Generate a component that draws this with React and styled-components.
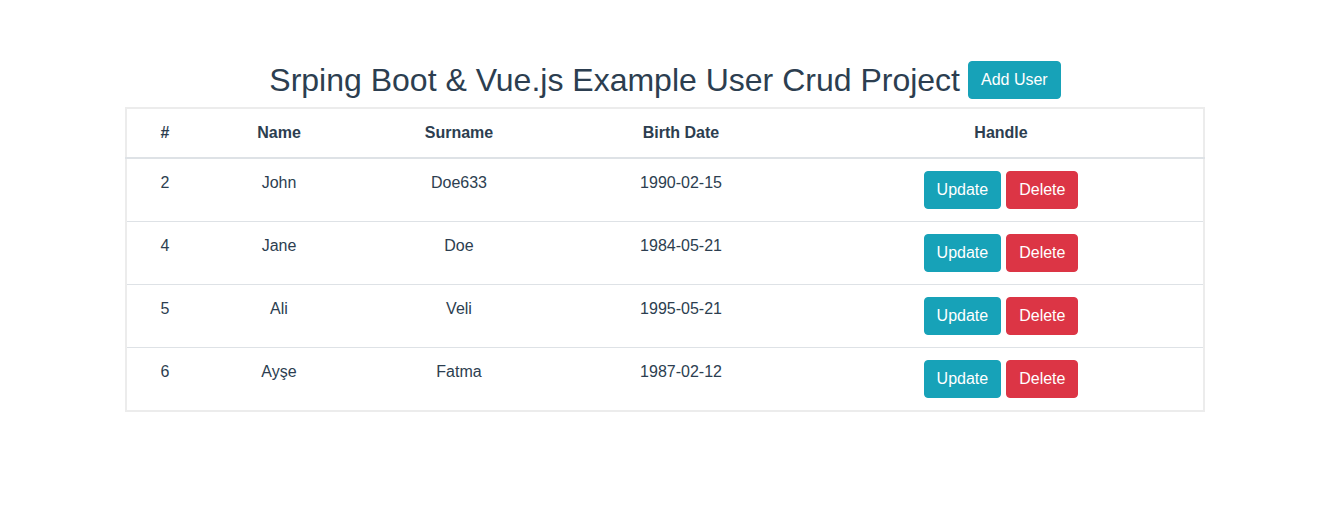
import React from "react";
import styled, { createGlobalStyle } from "styled-components";

const Global = createGlobalStyle`
  html, body { margin: 0; padding: 0; background: #fff; }
  body {
    font-family: "Liberation Sans", Arial, Helvetica, sans-serif;
    font-size: 16px;
    line-height: 1.5;
    color: #2c3e50;
  }
`;

const Page = styled.div`
  padding-top: 61px;
  display: flex;
  flex-direction: column;
  align-items: center;
  padding-right: 12px;
`;

const Heading = styled.div`
  display: flex;
  align-items: center;
  gap: 8px;
  margin-bottom: 8px;
`;

const Title = styled.h2`
  margin: 0;
  font-size: 32px;
  font-weight: 400;
  line-height: 1.2;
  color: #2c3e50;
`;

const Button = styled.button`
  font-family: "Liberation Sans", Arial, Helvetica, sans-serif;
  font-size: 16px;
  line-height: 24px;
  padding: 6px 12px;
  height: 38px;
  border: 1px solid ${(p) => p.$bg};
  background: ${(p) => p.$bg};
  color: #fff;
  border-radius: 4px;
  cursor: pointer;
`;

const Table = styled.table`
  width: 1080px;
  border-collapse: collapse;
  border: 2px solid #ececec;
  text-align: center;
  table-layout: fixed;
`;

const Th = styled.th`
  box-sizing: border-box;
  width: ${(p) => p.$w}px;
  padding: 12px;
  font-weight: 700;
  line-height: 24px;
  border-bottom: 2px solid #dee2e6;
  vertical-align: bottom;
`;

const Td = styled.td`
  padding: 12px;
  line-height: 24px;
  vertical-align: top;
  border-top: 1px solid #dee2e6;
`;

const Actions = styled.div`
  display: flex;
  justify-content: center;
  gap: 5px;
`;

const users = [
  { id: 2, name: "John", surname: "Doe633", birth: "1990-02-15" },
  { id: 4, name: "Jane", surname: "Doe", birth: "1984-05-21" },
  { id: 5, name: "Ali", surname: "Veli", birth: "1995-05-21" },
  { id: 6, name: "Ayşe", surname: "Fatma", birth: "1987-02-12" },
];

export default function App() {
  return (
    <>
      <Global />
      <Page>
        <Heading>
          <Title>Srping Boot &amp; Vue.js Example User Crud Project</Title>
          <Button $bg="#17a2b8">Add User</Button>
        </Heading>
        <Table>
          <thead>
            <tr>
              <Th $w={77}>#</Th>
              <Th $w={152}>Name</Th>
              <Th $w={208}>Surname</Th>
              <Th $w={236}>Birth Date</Th>
              <Th $w={405}>Handle</Th>
            </tr>
          </thead>
          <tbody>
            {users.map((u) => (
              <tr key={u.id}>
                <Td>{u.id}</Td>
                <Td>{u.name}</Td>
                <Td>{u.surname}</Td>
                <Td>{u.birth}</Td>
                <Td>
                  <Actions>
                    <Button $bg="#17a2b8">Update</Button>
                    <Button $bg="#dc3545">Delete</Button>
                  </Actions>
                </Td>
              </tr>
            ))}
          </tbody>
        </Table>
      </Page>
    </>
  );
}
